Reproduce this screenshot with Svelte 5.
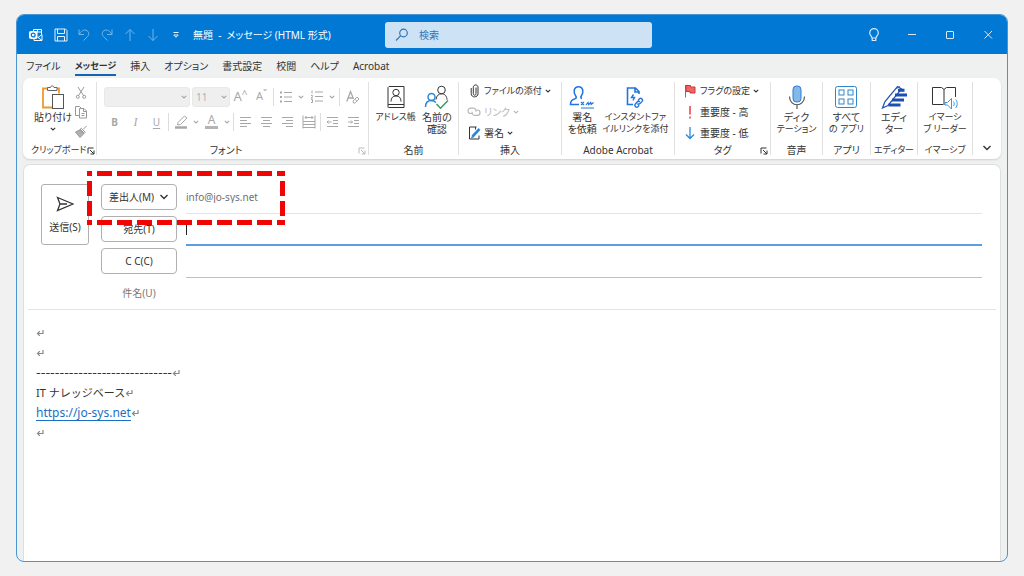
<script>
  // Each icon: [width, height, svg body]. Strokes inherit currentColor unless set.
  const icons = {
    outlook: [14, 14, '<path d="M4.5 3V1.5h8v5M8.500 1.500v3M12.500 4h-4M5 10v2.500h8V6.500L9 9.500"/><path d="M13 12.500L8.500 9"/><rect x=".5" y="3.500" width="7.500" height="7" rx="1" fill="#fff"/><circle cx="4.200" cy="7" r="1.900" stroke="#0078d4" stroke-width="1.300"/>'],
    save: [14, 14, '<path d="M1 1h10.500L13 2.500V13H1zM3.500 1v4.500h7V1M3.500 13V8.500h7V13"/>'],
    undo: [14, 14, '<path d="M2 1.500v5h5M2.300 6.200C4 3 6.500 1.500 9 2.200c3 .9 3.600 4.200 1.700 6.200L6.500 12.500"/>'],
    redo: [14, 14, '<path d="M12 1.500v5H7M11.700 6.200C10 3 7.500 1.500 5 2.200c-3 .9-3.600 4.200-1.700 6.200L7.500 12.500"/>'],
    up: [12, 14, '<path d="M6 13V1.500M1.500 6L6 1.500 10.500 6"/>'],
    down: [12, 14, '<path d="M6 1v11.500M1.500 8L6 12.500 10.500 8"/>'],
    more: [8, 8, '<path d="M1.500 1.500h5M1.800 4h4.400L4 6.300z"/>'],
    search: [14, 14, '<circle cx="8.500" cy="5" r="3.800" stroke-width="1.200"/><path d="M5.700 7.700L1 12.500" stroke-width="1.200"/>'],
    bulb: [12, 14, '<path d="M4 10C4 8 1.700 7.500 1.700 4.900a4.300 4.300 0 018.600 0C10.300 7.500 8 8 8 10zM4.200 10v2.500h3.600V10" stroke-width="1.200"/>'],
    min: [10, 10, '<path d="M1 4.500h8"/>'],
    max: [10, 10, '<rect x="1.500" y="1.500" width="7" height="7" rx=".5"/>'],
    close: [10, 10, '<path d="M1.500 1l7.500 7.500M9 1L1.500 8.500"/>'],
    chev: [6, 4, '<path d="M.8 .8L3 3 5.200 .8" stroke-width="1.100"/>'],
    bigchev: [10, 6, '<path d="M1.500 1L5 4.500 8.500 1" stroke-width="1.400"/>'],
    launch: [8, 8, '<path d="M1 6.500V1h5.500M3 3l4 4M7 3.500V7H3.500"/>'],
    paste: [24, 25, '<path d="M7 3.500H2v19h9M15.500 3.500H18v5" stroke="#eb9a2d" stroke-width="1.800"/><path d="M6.500 5.500v-3h3C9.500.4 13 .4 13 2.500h3v3z" fill="#fff" stroke="#666"/><rect x="11.500" y="9.500" width="11" height="14" fill="#fff" stroke="#555"/>'],
    cut: [12, 13, '<path d="M3 1l5.500 8.500M9 1L3.500 9.500"/><circle cx="2.800" cy="10.800" r="1.500"/><circle cx="9.200" cy="10.800" r="1.500"/>'],
    copy: [14, 14, '<path d="M5 10.500H1.500v-9h4l1.500 1.500"/><path d="M5.500 3.500H10L12.500 6v7h-7zM9.500 3.500v3h3M7.500 8.500h3M7.500 10.500h3"/>'],
    brush: [14, 14, '<path d="M12.500 1L9 4.500M6 4l4 4M7.300 3.300l4 4L10 8.700l-4.300-4z" /><path d="M5.500 5L1.500 7l4.500 5.500L9.500 9z" fill="#b0b0b0"/>'],
    bullets: [14, 12, '<path d="M5 1.500h8M5 6h8M5 10.500h8"/><path d="M1 1.500h2M1 6h2M1 10.500h2" stroke-width="1.800"/>'],
    numbers: [14, 13, '<path d="M5 2h8M5 6.500h8M5 11h8M2 .5v3M1 5.500h1.500v1L1 8h2M1 9.500h1.500v3H1"/>'],
    clear: [14, 14, '<path d="M.8 11.500L4.500 1.500l3 7.500M2.200 8h4.600" stroke-width="1.300"/><path d="M7 11l4-4 2 2-4 4H7.500zM8.800 9.200l2 2"/>'],
    pen: [14, 14, '<path d="M4 7.500L10.500 1 13 3 6.500 9.500 3.500 10z"/><path d="M1 12.500h12" stroke-width="2.400"/>'],
    left: [13, 12, '<path d="M1 1.500h11M1 4.500h7M1 7.500h11M1 10.500h7"/>'],
    center: [13, 12, '<path d="M1 1.500h11M3 4.500h7M1 7.500h11M3 10.500h7"/>'],
    right: [13, 12, '<path d="M1 1.500h11M5 4.500h7M1 7.500h11M5 10.500h7"/>'],
    dist: [14, 14, '<path d="M1 .5v13M13 .5v13M3 2.500h8M4.500 1L3 2.500 4.500 4M9.500 1L11 2.500 9.500 4M1 6.500h12M1 9.500h12M1 12.500h12"/>'],
    outdent: [13, 12, '<path d="M1 1.500h11M7 4.500h5M7 7.500h5M1 10.500h11M1 6h4.500M2.500 4.500L1 6l1.500 1.500"/>'],
    indent: [13, 12, '<path d="M1 1.500h11M7 4.500h5M7 7.500h5M1 10.500h11M1 6h4.500M4 4.500L5.500 6 4 7.500"/>'],
    book: [18, 24, '<path d="M1 22.500V2.500L2 1.500h15v21H1.500M1 19.500h16"/><circle cx="9" cy="7.500" r="3.200"/><path d="M4 16.500c0-3.500 1.700-5.500 5-5.500s5 2 5 5.500"/>'],
    people: [26, 24, '<circle cx="17.500" cy="5" r="3.800"/><path d="M12 14.500c.5-3.700 2.500-5.700 5.500-5.700 3.500 0 5.300 2.500 5.500 6"/><circle cx="7.500" cy="12" r="3.500" stroke="#2b88d8" stroke-width="1.500"/><path d="M1.500 22c0-4 2.300-6.400 6-6.400 2 0 3.400.8 4.400 2" stroke="#2b88d8" stroke-width="1.500"/><path d="M12.500 19l4 4.200 7.500-7.700" stroke="#3a9b62" stroke-width="1.500"/>'],
    clip: [9, 14, '<path d="M6 3.500v6.200c0 2-2.700 2-2.700 0V3.200c0-3 4.700-3 4.700 0v6.500c0 4.200-6.800 4.200-6.800 0V4"/>'],
    link: [14, 11, '<path d="M5 7.500H3.700a2.700 2.700 0 010-5.400h2.600a2.700 2.700 0 012.500 3.600M8.800 4h1.500a2.700 2.700 0 010 5.400H7.700a2.700 2.700 0 01-2.500-3.600" stroke-width="1.200"/>'],
    sign: [13, 14, '<path d="M8.500 1H1.500v12H11V9.500M7.500 1v2.500"/><path d="M4.500 10.500L11.500 3" stroke="#2b88d8" stroke-width="2.600"/><path d="M3.500 11.800l1-2 1.200 1z" stroke="#2b88d8"/>'],
    request: [26, 24, '<g stroke="#2374e0"><path d="M10 19.500H1.500c0-4 1.500-5 4.500-5.800 1.500-.5 1.500-1.700.7-2.700C4 7.500 4.700 1.700 9.500 1.700S15 7.500 12.300 11c-.8 1-.5 2 .7 2.600" stroke-width="1.600"/><path d="M12 17l3 3M15 17L12 20M17 20l2-2.500.7 2.200 2-2.200.5 2 2.300-2M12 23h13" stroke-width="1.200"/></g>'],
    instant: [18, 24, '<g stroke="#2374e0"><path d="M7 19.500H1.500V3h8L13 6.500V9M9 3v4h4" stroke-width="1.600"/><path d="M7.500 9.500L5.500 12.500h3L7 15.500" stroke-width="1.400"/><path d="M12 15.500l1.500-1.700c1.500-1.300 4 .7 2.600 2.600l-2 2.200c-1 .9-2 .6-2.700 0M14 17c-.9-.8-2-.8-2.800 0l-2 2.200c-1.200 1.800 1.200 3.900 2.700 2.500l1.300-1.400" stroke-width="1.400"/></g>'],
    flag: [12, 14, '<path d="M1.500 1v12.500" stroke="#777"/><path d="M2 1.500h4.500v1.500H11v6H6V7.500H2z" fill="#f06464" stroke="#d13438"/>'],
    bang: [4, 14, '<path d="M2 1v8.500M2 11.500v2" stroke="#e8484c" stroke-width="1.600"/>'],
    low: [10, 14, '<path d="M5 1v11.500M1 8.500l4 4 4-4" stroke="#2b88d8" stroke-width="1.300"/>'],
    mic: [18, 25, '<rect x="5" y="1" width="8" height="16" rx="3.500" fill="#83b9ea" stroke="#2b7cd3"/><path d="M1.500 11.500c0 11 15 11 15 0M9 19.500V24" stroke="#555" stroke-width="1.200"/>'],
    apps: [24, 24, '<g stroke="#2f86cd"><rect x="1.500" y="1.500" width="21" height="21" rx="2"/><rect x="5" y="5" width="5" height="5"/><rect x="14" y="5" width="5" height="5"/><rect x="5" y="14" width="5" height="5"/><rect x="14" y="14" width="5" height="5"/></g>'],
    editor: [26, 25, '<path d="M1.500 23L4 16.500 16.500 1.500 20.500 4 7 20.500z" stroke="#2458b8" stroke-width="1.300"/><path d="M15.500 3.500L19 1.500" stroke="#2458b8"/><path d="M17 5.200h6.500M14 10h12M11 15h12M7.500 20h12" stroke="#1e4fb0" stroke-width="3"/>'],
    reader: [28, 25, '<path d="M12 19.500H1.500v-17h9l2.500 2 2.500-2h9v9.500M13 4.500V20"/><path d="M14 17.500h2.500l4-4v10.500l-4-4H14z" stroke="#3a96dd" fill="#fff"/><path d="M22.500 16.500c1 1.300 1 3.200 0 4.500M24.700 14.500c2 2.500 2 6 0 8.500" stroke="#3a96dd"/>'],
    send: [18, 16, '<path d="M1.500 1.500L17 8 1.500 14.500 4 8zM4 8h7" stroke-width="1.300"/>'],
    ret: [8, 8, '<path d="M7 1v3.500H1.500M3.800 2.200L1.500 4.500l2.300 2.300" stroke-width="1.200"/>']
  };

  const quick = [
    ['save', '保存', false], ['undo', '元に戻す', true], ['redo', 'やり直し', true],
    ['up', '前へ', true], ['down', '次へ', true], ['more', 'カスタマイズ', false]
  ];
  const tabs = ['ファイル', 'メッセージ', '挿入', 'オプション', '書式設定', '校閲', 'ヘルプ', 'Acrobat'];
  const tail = [
    ['音声', 'mic', ['ディク', 'テーション']],
    ['アプリ', 'apps', ['すべて', 'の アプリ']],
    ['エディター', 'editor', ['エディ', 'ター']],
    ['イマーシブ', 'reader', ['イマーシ', 'ブ リーダー']]
  ];
  // Labels made mostly of kana are set one size down so they stay compact.
  const compact = (text) => (text.match(/[\u3040-\u30ff]/g) ?? []).length > 3;
</script>

{#snippet icon(name)}
  <svg class="icon" width={icons[name][0]} height={icons[name][1]} viewBox="0 0 {icons[name][0]} {icons[name][1]}" fill="none" stroke="currentColor" aria-hidden="true">{@html icons[name][2]}</svg>
{/snippet}

{#snippet big(name, lines)}
  <button class="big">
    <span class="pic">{@render icon(name)}</span>
    {#each lines as line}<span class:compact={compact(line)}>{line}</span>{/each}
  </button>
{/snippet}

{#snippet row(name, text, chevron, disabled)}
  <button class="row" {disabled}>
    <span class="mini">{@render icon(name)}</span>
    <span class:compact={compact(text)}>{text}</span>
    {#if chevron}{@render icon('chev')}{/if}
  </button>
{/snippet}

{#snippet tool(name, label)}
  <button class="tool" disabled aria-label={label}>{@render icon(name)}</button>
{/snippet}

{#snippet drop()}
  <button class="drop" disabled aria-label="その他">{@render icon('chev')}</button>
{/snippet}

<div class="desktop">
  <div class="window">
    <header class="titlebar">
      <div class="lead">
        <span class="app">{@render icon('outlook')}</span>
        {#each quick as [name, label, disabled]}
          <button class="quick" {disabled} aria-label={label}>{@render icon(name)}</button>
        {/each}
        <span class="title">無題&nbsp; - &nbsp;メッセージ (HTML 形式)</span>
      </div>
      <label class="search">
        {@render icon('search')}
        <input type="search" placeholder="検索" aria-label="検索" />
      </label>
      <div class="controls">
        <button aria-label="ヒント">{@render icon('bulb')}</button>
        <button aria-label="最小化">{@render icon('min')}</button>
        <button aria-label="最大化">{@render icon('max')}</button>
        <button aria-label="閉じる">{@render icon('close')}</button>
      </div>
    </header>

    <nav class="tabs">
      {#each tabs as tab, i}
        <button class:active={i === 1} class:compact={i === 1}>{tab}</button>
      {/each}
    </nav>

    <section class="ribbon">
      <div class="group">
        <div class="clipboard">
          <button class="big">
            <span class="pic">{@render icon('paste')}</span>
            <span>貼り付け</span>
            <span class="under">{@render icon('chev')}</span>
          </button>
          <div class="side">
            {@render tool('cut', '切り取り')}
            {@render tool('copy', 'コピー')}
            {@render tool('brush', '書式のコピー')}
          </div>
        </div>
        <div class="caption"><span class="compact">クリップボード</span><button class="launch" aria-label="クリップボードの詳細">{@render icon('launch')}</button></div>
      </div>

      <div class="group font">
        <div class="tools">
          <span class="combo face"><select disabled aria-label="フォント"><option></option></select>{@render icon('chev')}</span>
          <span class="combo size"><select disabled aria-label="サイズ"><option>11</option></select>{@render icon('chev')}</span>
          <button class="tool letter" disabled aria-label="拡大">A<sup>^</sup></button>
          <button class="tool letter small" disabled aria-label="縮小">A<sup>ˇ</sup></button>
          <i class="bar"></i>
          {@render tool('bullets', '箇条書き')}{@render drop()}
          {@render tool('numbers', '段落番号')}{@render drop()}
          <i class="bar wide"></i>
          {@render tool('clear', '書式のクリア')}
        </div>
        <div class="tools">
          <button class="tool" disabled><b>B</b></button>
          <button class="tool serif" disabled><em>I</em></button>
          <button class="tool" disabled><u>U</u></button>
          <i class="bar"></i>
          {@render tool('pen', '蛍光ペン')}{@render drop()}
          <button class="tool" disabled><span class="color">A</span></button>{@render drop()}
          <i class="bar"></i>
          {@render tool('left', '左揃え')}
          {@render tool('center', '中央揃え')}
          {@render tool('right', '右揃え')}
          {@render tool('dist', '均等割り付け')}
          <i class="bar"></i>
          {@render tool('outdent', 'インデント解除')}
          {@render tool('indent', 'インデント')}
        </div>
        <div class="caption"><span>フォント</span><button class="launch" disabled aria-label="フォントの詳細">{@render icon('launch')}</button></div>
      </div>

      <div class="group">
        <div class="bigs">
          {@render big('book', ['アドレス帳'])}
          {@render big('people', ['名前の', '確認'])}
        </div>
        <div class="caption"><span>名前</span></div>
      </div>

      <div class="group">
        <div class="rows">
          {@render row('clip', 'ファイルの添付', true, false)}
          {@render row('link', 'リンク', true, true)}
          {@render row('sign', '署名', true, false)}
        </div>
        <div class="caption"><span>挿入</span></div>
      </div>

      <div class="group">
        <div class="bigs">
          {@render big('request', ['署名', 'を依頼'])}
          {@render big('instant', ['インスタントファ', 'イルリンクを添付'])}
        </div>
        <div class="caption"><span>Adobe Acrobat</span></div>
      </div>

      <div class="group">
        <div class="rows">
          {@render row('flag', 'フラグの設定', true, false)}
          {@render row('bang', '重要度 - 高', false, false)}
          {@render row('low', '重要度 - 低', false, false)}
        </div>
        <div class="caption"><span>タグ</span><button class="launch" aria-label="タグの詳細">{@render icon('launch')}</button></div>
      </div>

      {#each tail as [caption, name, lines]}
        <div class="group">
          <div class="bigs">{@render big(name, lines)}</div>
          <div class="caption"><span class:compact={compact(caption)}>{caption}</span></div>
        </div>
      {/each}

      <button class="collapse" aria-label="リボンの表示オプション">{@render icon('bigchev')}</button>
    </section>

    <main class="compose">
      <form class="head" onsubmit={(e) => e.preventDefault()}>
        <button class="send">{@render icon('send')}<span>送信(S)</span></button>
        <div class="fields">
          <div class="field">
            <button type="button" class="who">差出人(M) {@render icon('bigchev')}</button>
            <span class="line soft"><input value="info@jo-sys.net" aria-label="差出人" readonly /></span>
            <svg class="mark" width="198" height="54" viewBox="0 0 198 54" fill="none" aria-hidden="true">
              <path d="M0 2.500h198M0 51.500h198M2.500 0v54M195.500 0v54" stroke="#f00404" stroke-width="5" stroke-dasharray="15 5" stroke-dashoffset="10" />
            </svg>
          </div>
          <div class="field">
            <button type="button" class="who">宛先(T)</button>
            <span class="line focus"><i class="caret"></i><input aria-label="宛先" /></span>
          </div>
          <div class="field">
            <button type="button" class="who">C C(C)</button>
            <span class="line"><input aria-label="CC" /></span>
          </div>
          <div class="field last">
            <label class="subject" for="subject">件名(U)</label>
            <span class="line none"><input id="subject" /></span>
          </div>
        </div>
      </form>
      <article class="body">
        <p>{@render icon('ret')}</p>
        <p>{@render icon('ret')}</p>
        <p><span class="rule">-----------------------------</span>{@render icon('ret')}</p>
        <p><span>IT ナレッジベース</span>{@render icon('ret')}</p>
        <p><a href="https://jo-sys.net">https://jo-sys.net</a>{@render icon('ret')}</p>
        <p>{@render icon('ret')}</p>
      </article>
    </main>
  </div>
</div>

<style>
  :global(body) { background: #f1f1f2; }
  .desktop {
    box-sizing: border-box;
    min-height: 100vh;
    padding: 14px 16px;
    display: flex;
    font: 10px/12px "Noto Sans", "Noto Sans CJK JP", sans-serif;
    font-feature-settings: "palt";
    color: #333;
  }
  .desktop * { box-sizing: border-box; }
  button, input, select {
    font: inherit;
    font-feature-settings: inherit;
    color: inherit;
    background: none;
    border: 0;
    padding: 0;
    margin: 0;
    min-width: 0;
    outline: 0;
  }
  button { display: flex; align-items: center; justify-content: center; white-space: nowrap; }
  .icon { flex: none; display: block; }
  .compact { font-size: 9px; }
  .window {
    flex: 1;
    min-width: 0;
    display: flex;
    flex-direction: column;
    background: #eff0f0;
    border: 1px solid #4a94d2;
    border-radius: 8px;
    overflow: hidden;
  }

  .titlebar {
    height: 39px;
    display: grid;
    grid-template-columns: 368fr 267fr 355fr;
    align-items: center;
    background: #0078d4;
    color: #fff;
  }
  .lead { display: flex; align-items: center; padding-left: 6px; white-space: nowrap; }
  .app { width: 26px; display: flex; justify-content: center; }
  .quick { width: 23px; height: 24px; opacity: .9; }
  .quick:disabled { opacity: .45; }
  .title { margin-left: 6px; }
  .search {
    height: 26px;
    display: flex;
    align-items: center;
    gap: 10px;
    padding-left: 10px;
    border-radius: 3px;
    background: #cde2f5;
    color: #3274b5;
  }
  .search input { flex: 1; }
  .search input::placeholder { color: #3274b5; opacity: 1; }
  .controls { display: flex; justify-content: flex-end; }
  .controls button { width: 38px; height: 24px; opacity: .85; }

  .tabs { height: 24px; display: flex; align-items: center; gap: 14px; padding-left: 9px; }
  .tabs button { height: 20px; padding-top: 1px; border-bottom: 2px solid transparent; }
  .tabs .active { font-weight: 700; border-color: #1464b4; }

  .ribbon {
    margin: 0 6px;
    height: 81px;
    display: grid;
    grid-template-columns: 74fr 272fr 90fr 103fr 113fr 96fr 52fr 48fr 47fr 55fr 28fr;
    background: #fff;
    border-radius: 7px;
    box-shadow: 0 1px 2px #0002;
  }
  .group {
    min-width: 0;
    margin: 4px 0;
    display: flex;
    flex-direction: column;
    justify-content: space-between;
    border-right: 1px solid #e0e0e0;
  }
  .caption { display: flex; justify-content: center; align-items: center; height: 14px; margin-bottom: -2px; position: relative; white-space: nowrap; }
  .launch { position: absolute; right: 2px; bottom: 2px; }
  .launch:disabled { color: #bbb; }
  .big { flex-direction: column; justify-content: flex-start; }
  .pic { height: 27px; padding-top: 1px; margin-top: 2px; }
  .under { height: 12px; display: flex; align-items: center; }
  .bigs { display: flex; justify-content: space-evenly; align-items: flex-start; }
  .clipboard { display: flex; align-items: flex-start; justify-content: space-between; padding: 0 6px 0 11px; }
  .side { display: flex; flex-direction: column; }
  .side .tool { width: 18px; height: 20px; color: #999; }
  .group:first-child .caption { justify-content: flex-start; padding-left: 8px; }
  .group:first-child .launch { right: 1px; }

  .font { justify-content: flex-start; padding-left: 7px; }
  .font .caption { margin-top: auto; padding-right: 20px; }
  .tools { display: flex; align-items: center; height: 25px; color: #a8a8a8; }
  .tools:first-child { margin-top: 2px; }
  .tool { width: 21px; height: 20px; }
  .tool u { text-underline-offset: 2px; }
  .serif { font-family: "Liberation Serif", serif; font-size: 12px; }
  .letter { font-size: 13px; align-items: flex-start; padding-top: 3px; }
  .small { font-size: 11px; }
  .letter sup { font-size: 10px; line-height: 8px; }
  .color { width: 13px; font-size: 12px; border-bottom: 3px solid #b4b4b4; }
  .drop { width: 10px; height: 20px; }
  .bar { width: 1px; height: 18px; margin: 0 1px; background: #ddd; }
  .wide { margin: 0 2px; }
  .combo { position: relative; display: flex; margin-right: 2px; }
  .combo select { width: 100%; height: 20px; padding-left: 3px; border: 1px solid #e8e8e8; border-radius: 3px; background: #efefef; appearance: none; opacity: 1; color: #b0b0b0; }
  .combo .icon { position: absolute; right: 3px; top: 8px; }
  .face { width: 86px; }
  .size { width: 38px; margin-right: 0; }

  .rows { display: flex; flex-direction: column; margin-top: -2px; padding-left: 8px; }
  .row { height: 21px; justify-content: flex-start; gap: 3px; }
  .row:disabled { color: #b8b8b8; }
  .mini { width: 14px; display: flex; justify-content: center; }
  .collapse { align-self: end; height: 22px; }

  .compose {
    flex: 1;
    margin: 5px 6px 0;
    background: #fff;
    border: 1px solid #dedede;
    border-bottom: 0;
    border-radius: 7px 7px 0 0;
  }
  .head { margin: 0 4px; padding: 17px 14px 0 13px; display: flex; align-items: flex-start; gap: 12px; border-bottom: 1px solid #e4e4e4; }
  .send { width: 48px; height: 61px; margin-top: 2px; flex-direction: column; gap: 9px; border: 1px solid #b0b0b0; border-radius: 3px; }
  .fields { flex: 1; min-width: 0; }
  .field { height: 32px; display: flex; gap: 9px; align-items: center; position: relative; }
  .last { height: 31px; }
  .who, .subject { width: 76px; flex: none; margin-bottom: 2px; }
  .who { height: 26px; gap: 5px; border: 1px solid #b0b0b0; border-radius: 4px; }
  .subject { text-align: center; color: #777; }
  .line { flex: 1; align-self: stretch; display: flex; align-items: center; border-bottom: 1px solid #c0c0c0; }
  .line input { flex: 1; color: #707070; padding-bottom: 2px; }
  .soft { border-color: #e4e4e4; }
  .focus { border-bottom: 2px solid #5aa0dc; }
  .none { border-color: transparent; }
  .caret { width: 1px; height: 12px; background: #222; }
  .mark { position: absolute; left: -14px; top: -11px; z-index: 1; pointer-events: none; }

  .body { padding: 13px 12px; font-size: 11px; line-height: 20px; font-feature-settings: normal; }
  .body p { margin: 0; height: 20px; display: flex; align-items: center; }
  .body .icon { color: #888; }
  .rule { font-family: "DejaVu Sans", sans-serif; font-size: 13px; }
  .body a { color: #1a6fc4; font-size: 12px; line-height: 15px; text-decoration: none; border-bottom: 1px solid #1a6fc4; }
</style>
